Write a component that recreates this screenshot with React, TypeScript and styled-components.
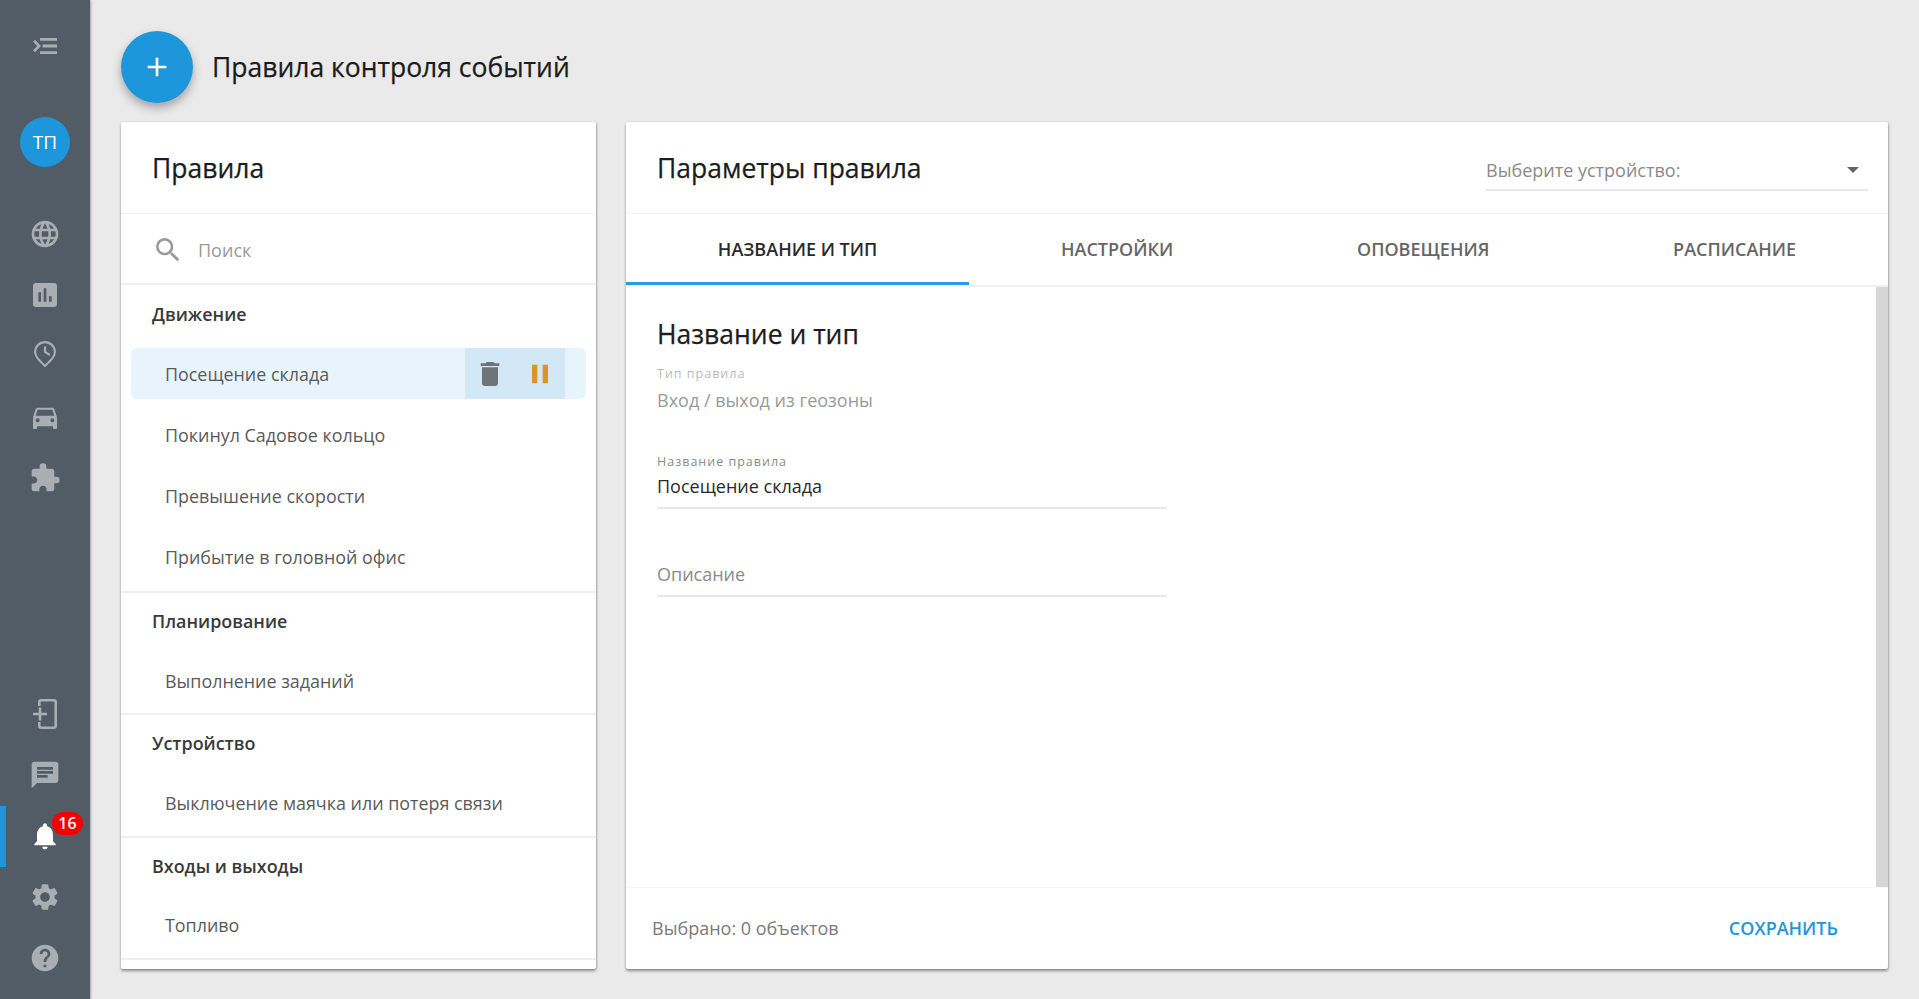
import styled, { createGlobalStyle } from "styled-components";
import {
  MdAdd,
  MdAssessment,
  MdChat,
  MdDelete,
  MdDirectionsCar,
  MdExtension,
  MdHelp,
  MdLanguage,
  MdNotifications,
  MdPause,
  MdSearch,
  MdSettings,
} from "react-icons/md";

const GlobalStyle = createGlobalStyle`
  html, body {
    margin: 0;
    height: 100%;
    background: #eaeaea;
    font-family: "Open Sans", "Noto Sans", sans-serif;
  }
  * { box-sizing: border-box; }
`;

const Page = styled.div`
  display: flex;
  height: 100vh;
  overflow: hidden;
  background: #eaeaea;
`;

const Sidebar = styled.nav`
  flex: 0 0 90px;
  display: flex;
  flex-direction: column;
  background: #515c67;
  box-shadow: 1px 0 2px rgba(0, 0, 0, 0.3);
  color: #a9aeb3;
`;

const MenuButton = styled.div`
  height: 61px;
  margin-top: 15px;
  display: flex;
  align-items: center;
  justify-content: center;
`;

const Avatar = styled.div`
  width: 50px;
  height: 50px;
  margin: 41px auto 36px;
  border-radius: 50%;
  background: #1e96dc;
  color: #fff;
  font-size: 19px;
  display: flex;
  align-items: center;
  justify-content: center;
`;

const NavGroup = styled.div`
  display: flex;
  flex-direction: column;
`;

const BottomGroup = styled(NavGroup)`
  margin-top: auto;
  padding-bottom: 10.5px;
`;

const NavItem = styled.div<{ $active?: boolean }>`
  position: relative;
  height: 61px;
  display: flex;
  align-items: center;
  justify-content: center;
  color: ${(p) => (p.$active ? "#fff" : "#a9aeb3")};
  border-left: 6px solid ${(p) => (p.$active ? "#1e96dc" : "transparent")};
  padding-right: 6px;
`;

const Badge = styled.span`
  position: absolute;
  left: 46px;
  top: 6px;
  width: 31px;
  height: 23px;
  border-radius: 12px;
  background: #f50000;
  color: #fff;
  font-size: 16px;
  font-weight: 600;
  display: flex;
  align-items: center;
  justify-content: center;
`;

const Main = styled.main`
  flex: 1;
  min-width: 0;
  display: flex;
  flex-direction: column;
  padding: 31px 31px 30px;
`;

const PageHeader = styled.header`
  flex: 0 0 91px;
  display: flex;
  align-items: flex-start;
  gap: 20px;
`;

const Fab = styled.button`
  width: 72px;
  height: 72px;
  padding: 0;
  border: none;
  border-radius: 50%;
  background: #1e96dc;
  color: #fff;
  display: flex;
  align-items: center;
  justify-content: center;
  box-shadow: 0 5px 10px rgba(0, 0, 0, 0.3);
`;

const PageTitle = styled.h1`
  margin: 0 0 0 -1px;
  height: 72px;
  line-height: 72px;
  font-size: 26.5px;
  font-weight: 500;
  -webkit-text-stroke: 0.25px #1c1c1c;
  color: #1c1c1c;
`;

const Panels = styled.div`
  flex: 1;
  min-height: 0;
  display: flex;
  gap: 30px;
`;

const Panel = styled.section`
  background: #fff;
  border-radius: 2px;
  box-shadow: 0 2px 3px rgba(0, 0, 0, 0.4), 1px 0 2px rgba(0, 0, 0, 0.12);
  display: flex;
  flex-direction: column;
  overflow: hidden;
`;

const RulesPanel = styled(Panel)`
  flex: 0 0 475px;
`;

const ParamsPanel = styled(Panel)`
  flex: 1;
  min-width: 0;
`;

const PanelHeader = styled.div`
  flex: 0 0 92px;
  display: flex;
  align-items: center;
  justify-content: space-between;
  padding: 0 20px 0 31px;
  border-bottom: 1px solid #f2f2f2;
`;

const PanelTitle = styled.h2`
  margin: 0;
  font-size: 26.5px;
  font-weight: 500;
  -webkit-text-stroke: 0.25px #1c1c1c;
  color: #1c1c1c;
`;

const SearchRow = styled.div`
  flex: 0 0 71px;
  display: flex;
  align-items: center;
  gap: 14px;
  padding: 2px 0 0 31px;
  border-bottom: 2px solid #efefef;
  color: #9a9a9a;
  font-size: 18px;
`;

const RuleList = styled.div`
  flex: 1;
  min-height: 0;
  overflow: hidden;
`;

const RuleGroup = styled.div`
  padding-bottom: 2.4px;
  border-bottom: 2px solid #efefef;

  &:first-child {
    padding-top: 1px;
    padding-bottom: 4px;
  }
`;

const GroupTitle = styled.div`
  height: 57px;
  padding: 0 0 1px 31px;
  display: flex;
  align-items: center;
  font-size: 17.9px;
  font-weight: 600;
  color: #3a3a3a;
`;

const RuleRow = styled.div`
  height: 61px;
  padding: 5px 10px;
`;

const RuleInner = styled.div<{ $selected?: boolean }>`
  height: 51px;
  padding-left: 34px;
  border-radius: 6px;
  display: flex;
  align-items: center;
  justify-content: space-between;
  background: ${(p) => (p.$selected ? "#e8f4fb" : "transparent")};
  font-size: 17.9px;
  color: #5a5a5a;
`;

const RuleActions = styled.div`
  display: flex;
  height: 100%;
  margin-right: 21px;
  background: #d2e8f6;
`;

const ActionButton = styled.div<{ $color: string }>`
  width: 50px;
  display: flex;
  align-items: center;
  justify-content: center;
  color: ${(p) => p.$color};
`;

const DeviceSelect = styled.div`
  width: 382px;
  height: 44px;
  margin-top: 3px;
  padding: 3px 9px 0 0;
  display: flex;
  align-items: center;
  justify-content: space-between;
  border-bottom: 2px solid #e8e8e8;
  font-size: 18px;
  color: #8a8a8a;
`;

const Caret = styled.span`
  width: 0;
  height: 0;
  border-left: 6px solid transparent;
  border-right: 6px solid transparent;
  border-top: 6px solid #666;
`;

const Tabs = styled.div`
  flex: 0 0 71px;
  display: flex;
  border-bottom: 2px solid #efefef;
`;

const Tab = styled.div<{ $active?: boolean }>`
  flex: 1 1 auto;
  height: 71px;
  padding-top: 2px;
  display: flex;
  align-items: center;
  justify-content: center;
  font-size: 18px;
  font-weight: 600;
  color: ${(p) => (p.$active ? "#2a2a2a" : "#666")};
  border-bottom: 3px solid ${(p) => (p.$active ? "#2b9be0" : "transparent")};
`;

const Body = styled.div`
  flex: 1;
  min-height: 0;
  display: flex;
`;

const Form = styled.div`
  flex: 1;
  padding: 27px 31px 0;
`;

const Scrollbar = styled.div`
  flex: 0 0 12px;
  background: #d6d6d6;
`;

const FormTitle = styled.h3`
  margin: 0 0 11px;
  font-size: 26.5px;
  line-height: 40px;
  font-weight: 500;
  -webkit-text-stroke: 0.25px #1c1c1c;
  color: #1c1c1c;
`;

const Field = styled.div<{ $underline?: boolean }>`
  width: 510px;
  ${(p) => (p.$underline ? "border-bottom: 2px solid #e8e8e8;" : "")}
`;

const ReadonlyField = styled(Field)`
  margin-bottom: 41px;
`;

const NameField = styled(Field)`
  margin-bottom: 53px;
  padding-bottom: 9px;
`;

const DescriptionField = styled(Field)`
  padding-bottom: 9px;
`;

const FieldLabel = styled.div<{ $muted?: boolean }>`
  font-size: 12.5px;
  line-height: 18px;
  letter-spacing: 1px;
  color: ${(p) => (p.$muted ? "#b9b9b9" : "#8a8a8a")};
`;

const FieldValue = styled.div<{ $tone: string }>`
  margin-top: 5px;
  font-size: 18px;
  line-height: 24px;
  color: ${(p) => p.$tone};
`;

const NameValue = styled(FieldValue)`
  margin-top: 3px;
`;

const Footer = styled.div`
  flex: 0 0 82px;
  display: flex;
  align-items: center;
  justify-content: space-between;
  padding: 0 50px 2px 26px;
  border-top: 1px solid #f6f6f6;
  font-size: 18px;
  color: #7a7a7a;
`;

const SaveButton = styled.span`
  font-size: 18px;
  font-weight: 600;
  color: #1e96dc;
`;

const PinSvg = styled.svg`
  margin-bottom: 4px;
`;

const MenuIcon = () => (
  <svg width="24" height="16" viewBox="0 0 24 16" fill="none" stroke="currentColor" strokeWidth="2.8">
    <path d="M7 1.4h17M9.5 8H24M7 14.600h17" />
    <path d="M1 2.600 6 8l-5 5.400" />
  </svg>
);

const PinClockIcon = () => (
  <PinSvg width="22" height="26" viewBox="0 0 22 26" fill="none" stroke="currentColor" strokeWidth="2.2">
    <path d="M11 1.100a9.900 9.900 0 0 1 9.900 9.900c0 4.600-4.100 8.400-9.900 14C5.200 19.400 1.100 15.600 1.100 11A9.900 9.900 0 0 1 11 1.100z" />
    <path d="M11 5.500V11l5 3" />
  </PinSvg>
);

const DeviceAddIcon = () => (
  <svg width="24" height="30" viewBox="0 0 24 30" fill="none" stroke="currentColor" strokeWidth="2.6">
    <path d="M6.300 7V3.300a2 2 0 0 1 2-2h12.400a2 2 0 0 1 2 2v23.400a2 2 0 0 1-2 2H8.300a2 2 0 0 1-2-2V23" />
    <path d="M0 15h14M7 8.500v13" />
  </svg>
);

const ruleGroups = [
  {
    title: "Движение",
    rules: [
      "Посещение склада",
      "Покинул Садовое кольцо",
      "Превышение скорости",
      "Прибытие в головной офис",
    ],
  },
  { title: "Планирование", rules: ["Выполнение заданий"] },
  { title: "Устройство", rules: ["Выключение маячка или потеря связи"] },
  { title: "Входы и выходы", rules: ["Топливо"] },
];

const topNav = [
  <MdLanguage size={32} />,
  <MdAssessment size={32} />,
  <PinClockIcon />,
  <MdDirectionsCar size={32} />,
  <MdExtension size={32} />,
];

export default function App() {
  return (
    <Page>
      <GlobalStyle />
      <Sidebar>
        <MenuButton>
          <MenuIcon />
        </MenuButton>
        <Avatar>ТП</Avatar>
        <NavGroup>
          {topNav.map((icon, i) => (
            <NavItem key={i}>{icon}</NavItem>
          ))}
        </NavGroup>
        <BottomGroup>
          <NavItem>
            <DeviceAddIcon />
          </NavItem>
          <NavItem>
            <MdChat size={32} />
          </NavItem>
          <NavItem $active>
            <MdNotifications size={32} />
            <Badge>16</Badge>
          </NavItem>
          <NavItem>
            <MdSettings size={32} />
          </NavItem>
          <NavItem>
            <MdHelp size={32} />
          </NavItem>
        </BottomGroup>
      </Sidebar>
      <Main>
        <PageHeader>
          <Fab>
            <MdAdd size={32} />
          </Fab>
          <PageTitle>Правила контроля событий</PageTitle>
        </PageHeader>
        <Panels>
          <RulesPanel>
            <PanelHeader>
              <PanelTitle>Правила</PanelTitle>
            </PanelHeader>
            <SearchRow>
              <MdSearch size={32} />
              Поиск
            </SearchRow>
            <RuleList>
              {ruleGroups.map((group) => (
                <RuleGroup key={group.title}>
                  <GroupTitle>{group.title}</GroupTitle>
                  {group.rules.map((rule) => {
                    const selected = rule === "Посещение склада";
                    return (
                      <RuleRow key={rule}>
                        <RuleInner $selected={selected}>
                          {rule}
                          {selected && (
                            <RuleActions>
                              <ActionButton $color="#6f7478">
                                <MdDelete size={32} />
                              </ActionButton>
                              <ActionButton $color="#dc9426">
                                <MdPause size={32} />
                              </ActionButton>
                            </RuleActions>
                          )}
                        </RuleInner>
                      </RuleRow>
                    );
                  })}
                </RuleGroup>
              ))}
            </RuleList>
          </RulesPanel>
          <ParamsPanel>
            <PanelHeader>
              <PanelTitle>Параметры правила</PanelTitle>
              <DeviceSelect>
                Выберите устройство:
                <Caret />
              </DeviceSelect>
            </PanelHeader>
            <Tabs>
              <Tab $active>НАЗВАНИЕ И ТИП</Tab>
              <Tab>НАСТРОЙКИ</Tab>
              <Tab>ОПОВЕЩЕНИЯ</Tab>
              <Tab>РАСПИСАНИЕ</Tab>
            </Tabs>
            <Body>
              <Form>
                <FormTitle>Название и тип</FormTitle>
                <ReadonlyField>
                  <FieldLabel $muted>Тип правила</FieldLabel>
                  <FieldValue $tone="#9a9a9a">Вход / выход из геозоны</FieldValue>
                </ReadonlyField>
                <NameField $underline>
                  <FieldLabel>Название правила</FieldLabel>
                  <NameValue $tone="#2a2a2a">Посещение склада</NameValue>
                </NameField>
                <DescriptionField $underline>
                  <FieldValue $tone="#8a8a8a">Описание</FieldValue>
                </DescriptionField>
              </Form>
              <Scrollbar />
            </Body>
            <Footer>
              Выбрано: 0 объектов
              <SaveButton>СОХРАНИТЬ</SaveButton>
            </Footer>
          </ParamsPanel>
        </Panels>
      </Main>
    </Page>
  );
}
